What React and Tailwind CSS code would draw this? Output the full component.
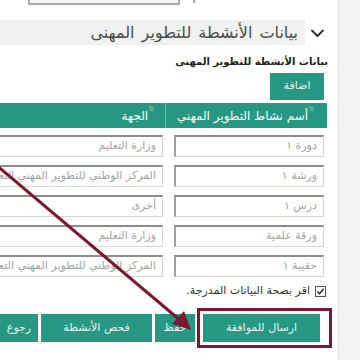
import React from 'react'

const rows = [
	{ name: 'دورة ١', org: 'وزارة التعليم' },
	{ name: 'ورشة ١', org: 'المركز الوطني للتطوير المهني التعليمي' },
	{ name: 'درس ١', org: 'أخرى' },
	{ name: 'ورقة علمية', org: 'وزارة التعليم' },
	{ name: 'حقيبة ١', org: 'المركز الوطني للتطوير المهني التعليمي' },
]

const SortMark = () => (
	<span className="text-[7px] leading-none text-[#7cc7b8] self-start mt-[3px] ms-[2px]">⇅</span>
)

const Field = ({ value, className }) => (
	<div
		className={`h-[22px] bg-white border border-[#d6d6d6] border-t-2 border-t-[#8c8c8c] border-l-2 border-l-[#a0a0a0] flex items-center pr-[6px] text-[11px] text-[#a3a3a3] whitespace-nowrap overflow-hidden ${className}`}
	>
		{value}
	</div>
)

export default function App() {
	return (
		<div
			dir="rtl"
			className="w-[360px] h-[360px] overflow-hidden flex bg-white relative"
			style={{ fontFamily: '"DejaVu Sans", "Noto Sans", sans-serif' }}
		>
			{/* right gutter */}
			<div className="w-[22px] shrink-0 bg-[#f5f5f5] border-l border-[#e2e2e2]" />

			<div className="flex-1 flex flex-col min-w-0">
				{/* top input edge */}
				<div className="h-[5px] shrink-0 flex items-start">
					<div className="ms-[143px] w-[2px] h-[3px] bg-[#aaaaaa]" />
					<div className="ms-[13px] w-[152px] h-[5px] border-x-2 border-b-2 border-[#aaaaaa] bg-[#f7f7f7]" />
				</div>

				{/* section header */}
				<div className="mt-[15px] h-[25px] flex items-center">
					<svg className="ms-[13px] w-[15px] h-[10px] shrink-0" viewBox="0 0 15 10" fill="none">
						<path d="M2 2.5 L7.5 8 L13 2.5" stroke="#333" strokeWidth="2" strokeLinecap="round" />
					</svg>
					<div className="ms-[5px] flex-1 h-full bg-[#f1f1f1] flex items-center pr-[7px] text-[16px] [word-spacing:2px] text-[#4a4a4a] whitespace-nowrap">
						بيانات الأنشطة للتطوير المهنى
					</div>
				</div>

				{/* subtitle */}
				<div className="mt-[10px] pr-[10px] h-[13px] flex items-center text-[10px] font-bold text-[#222]">
					بيانات الأنشطة للتطوير المهنى
				</div>

				{/* add button */}
				<div className="mt-[5px] pr-[14px] flex">
					<button className="w-[54px] h-[27px] bg-[#279884] text-[#e4f3ef] text-[11px] flex items-center justify-center">
						اضافة
					</button>
				</div>

				{/* table */}
				<div className="mt-[3px] ms-[11px] flex flex-col">
					<div className="h-[25px] bg-[#279884] flex text-white text-[12px]">
						<div className="w-[162px] shrink-0 flex items-center pr-[11px] border-l border-[#6cbcad]">
							<SortMark />
							<span>أسم نشاط التطوير المهني</span>
						</div>
						<div className="flex-1 flex items-center pr-[9px]">
							<SortMark />
							<span>الجهة</span>
						</div>
					</div>
					{rows.map((r, i) => (
						<div key={i} className="h-[30px] pt-[7px] flex">
							<div className="w-[162px] shrink-0 pr-[3px]">
								<Field value={r.name} className="w-[150px]" />
							</div>
							<div className="flex-1 pr-[2px] overflow-hidden">
								<Field value={r.org} className="w-[190px]" />
							</div>
						</div>
					))}
				</div>

				{/* confirmation */}
				<div className="mt-[7px] h-[13px] pr-[12px] flex items-center text-[11px] text-[#333]">
					<span className="w-[11px] h-[11px] border border-[#555] bg-white flex items-center justify-center shrink-0">
						<svg viewBox="0 0 10 10" className="w-[9px] h-[9px]" fill="none">
							<path d="M1.5 5 L4 7.5 L8.5 2" stroke="#222" strokeWidth="1.6" />
						</svg>
					</span>
					<span className="mr-[5px]">اقر بصحة البيانات المدرجة.</span>
				</div>

				{/* actions */}
				<div className="mt-[16px] pr-[18px] flex text-[11px] text-[#e4f3ef]">
					<div className="relative">
						<button className="w-[117px] h-[28px] bg-[#279884] flex items-center justify-center">
							ارسال للموافقة
						</button>
						<div className="absolute top-[-6px] bottom-[-6px] left-[-6px] right-[-12px] border-[3px] border-[#7b1a2e]" />
					</div>
					<button className="mr-[8px] w-[40px] h-[28px] bg-[#279884] flex items-center justify-center">
						حفظ
					</button>
					<button className="mr-[3px] w-[111px] h-[28px] bg-[#279884] flex items-center justify-center">
						فحص الأنشطة
					</button>
					<button className="mr-[3px] w-[38px] h-[28px] bg-[#279884] flex items-center justify-center">
						رجوع
					</button>
				</div>
			</div>

			{/* annotation arrow */}
			<svg className="absolute inset-0 pointer-events-none" width="360" height="360" viewBox="0 0 360 360">
				<line x1="-5" y1="164" x2="181" y2="321" stroke="#7b1a2e" strokeWidth="3" />
				<polygon points="191,330 172,324 184,311" fill="#7b1a2e" />
			</svg>
		</div>
	)
}
